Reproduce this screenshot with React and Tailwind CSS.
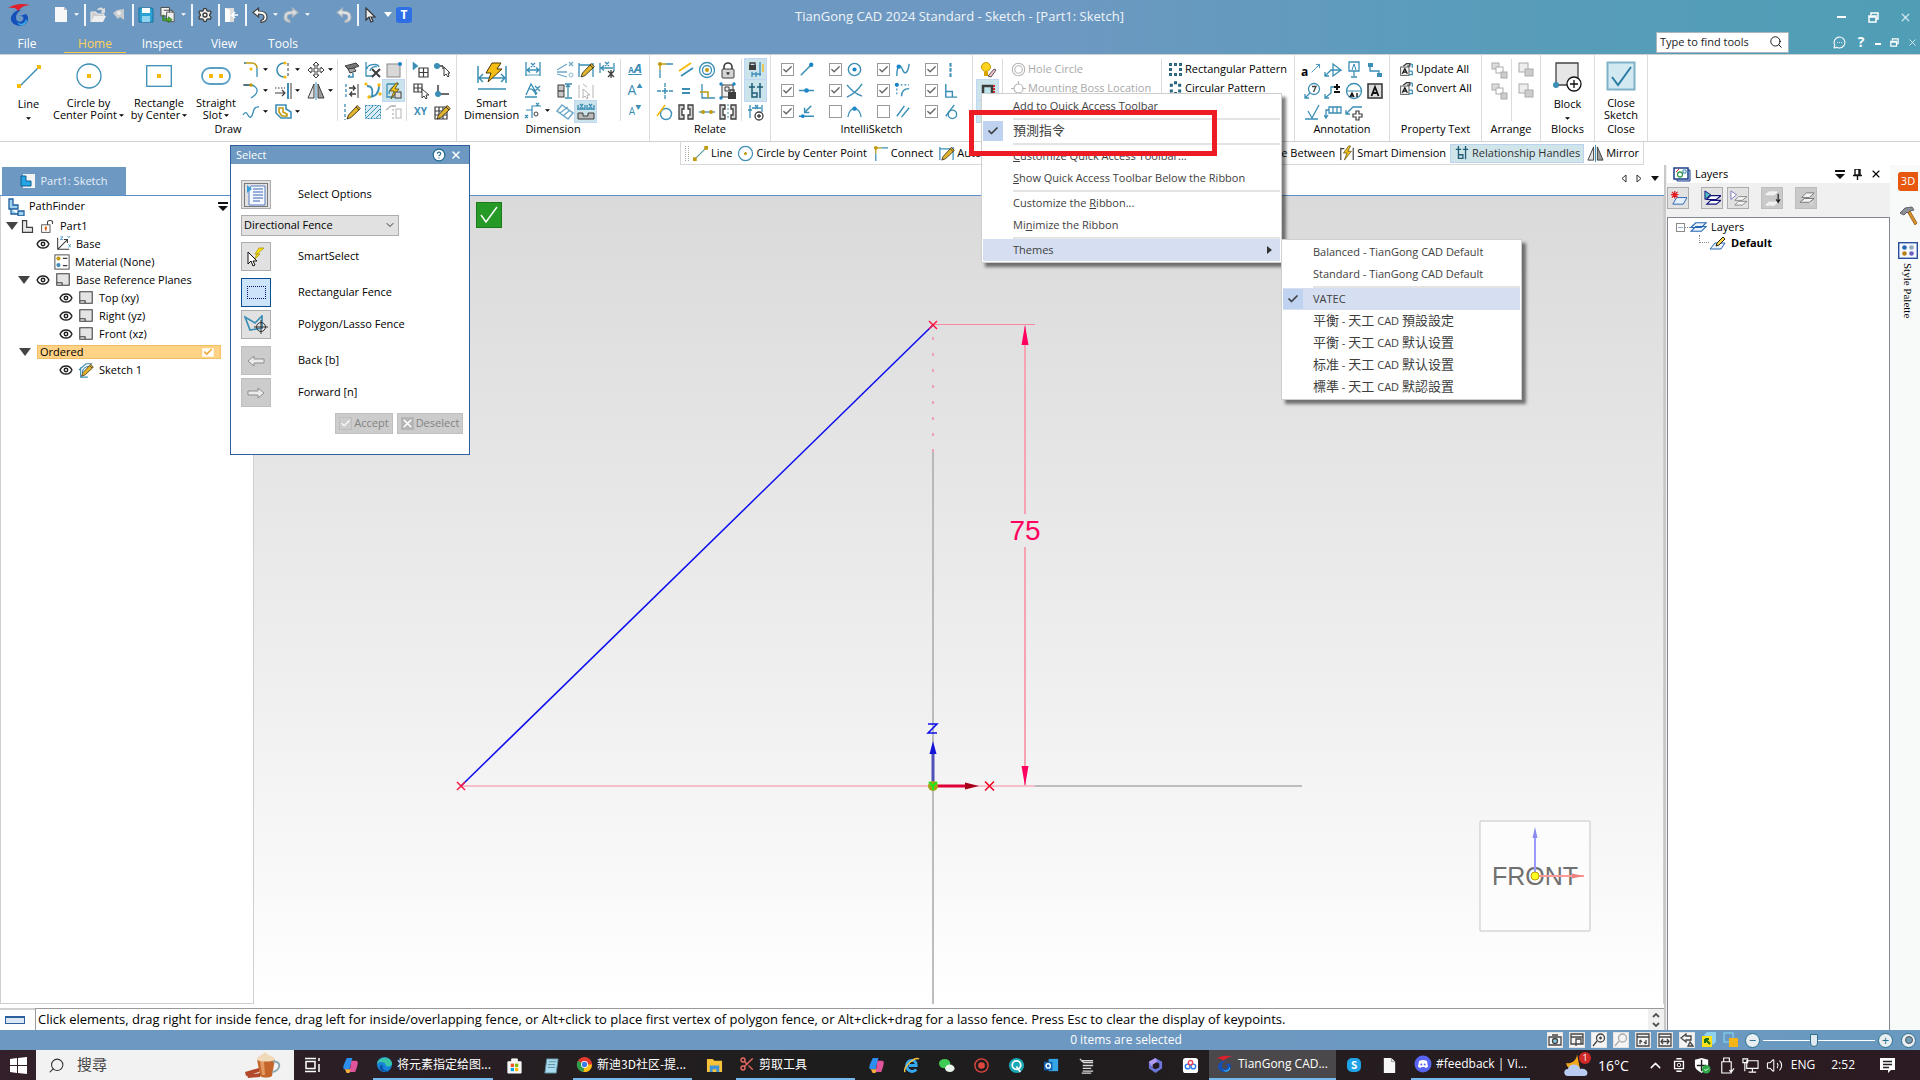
// File: src/screens/Sketch/SketchWorkspace.jsx
import React from 'react';
import {
  Search, Settings, MousePointer2, Minus, X, HelpCircle, ChevronUp, ChevronDown, Eye, Check,
  MessageCircleMore, Volume2, Usb, MonitorSmartphone, Scissors, MessageSquareText,
} from 'lucide-react';

const T = '#3b8eb5';
const Y = '#f7b90a';
const O = '#c09a10';
const D = '#3d3d3d';
const L = '#b4b4b4';

const P = ({ d, c = T, w = 1.3, f = 'none', dash }) => (
  <path d={d} stroke={c} strokeWidth={w} fill={f} strokeDasharray={dash} />
);
const Dot = ({ x, y, r = 2, c = '#1c86c8' }) => <circle cx={x} cy={y} r={r} fill={c} />;
const Bolt = ({ d = 'M11 1L5 9h4l-3 8 8-10h-4l3-6z' }) => <path d={d} fill="#f5c518" stroke="#5b4a10" strokeWidth=".8" />;
const Pencil = () => <path d="M4 16l1.500-4L13 4l3 3-8 7.500zM13 4l1.200-1.500 3 3L16 7" fill="#e3b52c" stroke="#3d3320" strokeWidth=".9" />;

// every small ribbon glyph sits in an 18 x 18 box
const ICONS = {
  fillet: <><P d="M2 2h8a5 5 0 0 1 5 5" c={O} w={1.6} /><P d="M2 2h2M15 7v9" /><Dot x={9} y={8} r={1.5} c={Y} /></>,
  arc: <><P d="M2 3h7c6 1 8 6 4 10l-4 3" /><P d="M1 3h7" c={D} w={1} /><Dot x={9} y={3} r={1.8} c={O} /></>,
  curve: <P d="M1 12c4-7 5 4 8 2s1-11 8-10" />,
  arcDash: <><P d="M10 2a7 7 0 1 0 0 14" w={1.6} /><P d="M14 2v14" c={D} w={1} dash="3 2" /><Dot x={11} y={2} r={1.6} c={Y} /><Dot x={11} y={16} r={1.6} c={Y} /></>,
  extend: <><P d="M14 1v16" w={2} /><P d="M17 1v16" c={D} w={1} /><P d="M1 6h10" c={D} dash="1.5 1.5" w={1} /><P d="M1 11h9M8 8l3 3-3 3" c={D} w={1.2} /></>,
  offset: <><P d="M2 2h10v4l5 3v6H7l-5-5z" w={1.6} /><P d="M5 5h4v4l4 2v2H8L5 9z" c={O} w={1.6} /></>,
  move: <P d="M9 1l3 3h-2v4h4V6l3 3-3 3v-2h-4v4h2l-3 3-3-3h2v-4H4v2L1 9l3-3v2h4V4H6z" c={D} w={1} f="#fff" />,
  mirror: <><P d="M7 2v14H1z" c={D} w={1} f="#e4e4e4" /><P d="M11 2v14h6z" c={D} w={1} f="#9b9b9b" /><P d="M9 0v18" w={1} /></>,
  plane: <><P d="M2 5l11-3 3 3-10 4z" c={D} w={1} f="#777" /><P d="M5 8l6-1 2 3-6 2z" c={D} w={1} f="#aaa" /><P d="M10 12v4H5M7 14l-2 2" w={1.5} /></>,
  trim: <><P d="M2 1v14h6M3 8c0-5 11-6 12-2M6 10c0-3 4-5 7-4" /><P d="M8 8l8 8M16 8l-8 8" c={D} w={2} /></>,
  square: <><rect x="2" y="3" width="13" height="13" fill="#d8d8d8" stroke="#888" /><Dot x={15} y={3} r={2} /></>,
  split: <><P d="M3 2v14" dash="3 2" /><P d="M15 2v14" c={D} w={1} /><P d="M6 6h6l-2-2.500M12 6l-2 2.500M13 12H7l2-2.500M7 12l2 2.500" c={D} /></>,
  blend: <><P d="M3 4c5 0 6 3 5 10M15 4c0 8-4 11-11 11" w={1.8} /><Dot x={2} y={2} r={1.6} c={Y} /><Dot x={15} y={3} r={1.7} c={Y} /><Dot x={16} y={12} r={1.7} c={Y} /><Dot x={5} y={15} r={1.7} c={Y} /></>,
  boltSketch: <><P d="M2 2h12M2 2v13h7M4 12C4 7 8 4 12 4" /><Bolt /><rect x="10" y="10" width="6" height="6" fill="#ddd" stroke={D} /></>,
  pencilDash: <><P d="M2 1v16" dash="3 2" /><Pencil /></>,
  hatch: <><rect x="1.5" y="2.5" width="15" height="13" fill="#d9ecf5" stroke={T} strokeDasharray="2 1" /><P d="M2 10l7-7M2 15L14 3M7 15l9-9M12 15l4-4" w={1} /></>,
  fold: <><P d="M1 7l5-4h5" c={L} /><rect x="11" y="6" width="5" height="9" fill="none" stroke={L} /><P d="M8 2v14" c={L} dash="2 2" /></>,
  gridArrow: <><P d="M1 1v8l5-4z" f={T} w={.5} /><P d="M7 7h9v9H7zM11.500 7v9M7 11.500h9" c={D} w={1.2} /></>,
  gridCursor: <><P d="M2 2h8v8H2zM6 2v8M2 6h8" c={D} w={1.2} /><P d="M10 7v9l2-2 2 3 1-1-1-3h3z" c={D} w={1} f="#fff" /></>,
  nodeCursor: <><P d="M2 5h8M10 5v3" c={D} /><Dot x={4} y={5} r={3} c={T} /><P d="M11 6v9l2-2 2 3 1-1-1-3h2z" c={D} w={1} f="#fff" /></>,
  corner: <><P d="M5 3v9h11" c={D} w={1.5} /><Dot x={5} y={12} r={3} c={T} /></>,
  gridPencil: <><P d="M2 4h12v12H2zM6 4v12M10 4v12M2 8h12M2 12h12" c={D} w={1.2} /><Pencil /></>,
  dimH: <><P d="M2 2v14M16 2v14M3 10h12M3 10l3-2.500M3 10l3 2.500M15 10l-3-2.500M15 10l-3 2.500M7 3l4 4M11 3L7 7" /><P d="M2 15h14" w={.8} /></>,
  dimA: <><P d="M1 16h12M2 14L7 3l6 10M4 8c4-1 7 2 8 6M11 5l5 5M16 5l-5 5" /></>,
  dimC: <><P d="M2 8h6v8M8 8V4h9M12 1l3 3M15 1l-3 3M1 13l3 3M4 13l-3 3" w={1.2} /><circle cx="12" cy="12" r="2" stroke={D} fill="none" /></>,
  slopes: <><P d="M1 9L11 3M1 11h10M1 13l10 3M13 1l4 4M17 1l-4 4" c="#6fa9c6" /><circle cx="15" cy="14" r="2" stroke="#8dbbd2" fill="none" /></>,
  dimV: <><rect x="2" y="3" width="6" height="12" fill="#c8c8c8" stroke={D} /><P d="M2 9h6" c={D} /><P d="M12 3v12M9 2h7M9 16h7M10 5l2-2 2 2" /></>,
  dimD: <><P d="M1 8l5-6 11 8-5 6zM4 10l8-6M7 13l7-6" c="#6fa9c6" w={1.5} /></>,
  dimPencil: <><P d="M2 2v14M16 2v14M2 4h14" /><Pencil /></>,
  dimX: <><P d="M2 2v10M16 2v8M3 7h12M3 7l3-2.500M3 7l3 2.500M7 1l4 4M11 1L7 5" /><P d="M10 10l6 6M16 10l-6 6M13 9v8" c={D} /></>,
  dimOff: <><P d="M2 3v13M16 3v13M6 2l4 3" c={L} w={1} /><P d="M6 7v9l2-2 2 3 1-1-1-3h3z" c={L} w={1} /></>,
  stampDim: <><P d="M1 2v5M8 2v5M1 6h7M10 2v5M17 2v5M10 6h7M3 1l3 4M6 1L3 5M12 1l3 4M15 1l-3 4" /><P d="M1 10h5v3h5v-3h6v6H1z" c={D} f="#bbb" w={1} /></>,
  connect: <><P d="M4 3h6M4 3v6" c={O} w={1.4} /><P d="M10 3h7M4 9v8" /><Dot x={4} y={3} r={2} c={O} /></>,
  parallel: <><P d="M2 10L14 2" c={Y} w={1.8} /><P d="M4 15l12-8" w={1.8} /></>,
  rings: <><circle cx="9" cy="9" r="7.5" fill="none" stroke={T} strokeWidth="1.3" /><circle cx="9" cy="9" r="4.5" fill="none" stroke={T} strokeWidth="1.3" /><Dot x={9} y={9} r={2} c={O} /></>,
  lock: <><P d="M5 9V6a4 4 0 0 1 8 0v3" c={D} w={1.6} /><rect x="3" y="8" width="12" height="9" rx="1" fill="#d5d5d5" stroke={D} /><P d="M9 11v3M7.500 12h3" c={D} /></>,
  cross: <><P d="M9 1v4M9 13v4M1 9h4M13 9h4" /><P d="M6 9h6M9 6v6" w={1.5} /></>,
  equal: <P d="M5 7h8M5 11h8" w={2} />,
  perp: <><P d="M4 2v14h13" c={T} /><P d="M2 10h8v6" c={O} w={1.5} /></>,
  rigid: <><rect x="3" y="3" width="11" height="12" fill="#eee" stroke={D} /><P d="M6 5h4v4H6z" c={D} w={1} /><Dot x={2} y={2} r={1.7} /><Dot x={15} y={2} r={1.7} /><Dot x={2} y={16} r={1.7} /><rect x="9" y="10" width="8" height="7" fill={D} /><P d="M11 10V8h4v2" c={D} /></>,
  tangent: <><circle cx="10" cy="11" r="5.5" fill="none" stroke={T} strokeWidth="1.4" /><P d="M1 13L9 2" c={Y} w={1.5} /></>,
  symL: <><P d="M2 2h5v4H5v6h2v4H2zM16 2h-5v4h2v6h-2v4h5z" c={D} f="#d5d5d5" /></>,
  symR: <><P d="M1 2h5v4H4v6h2v4H1zM17 2h-5v4h2v6h-2v4h5z" c={D} f="#d5d5d5" /><P d="M9 1v16" dash="2 2" w={1} /></>,
  collinear: <><P d="M1 9h16" /><Dot x={5} y={9} r={2} c={O} /><Dot x={13} y={9} r={2} c={O} /></>,
  lockDim: <><rect x="2" y="4" width="7" height="5" fill={D} /><P d="M3 4V2h5v2" c={D} /><P d="M13 1v14M5 13h9M5 11v5M9 11v5" /><P d="M16 3v8" c={Y} /></>,
  handles: <><P d="M5 1v14h5v-4H5M13 1v15M2 5h6M10 5h6" c="#1f5d77" w={1.5} /></>,
  relAdd: <><P d="M3 2v13M15 2v7M1 7h4M5 5h9M8 2l3 4M11 2L8 6" /><circle cx="12" cy="13" r="4" fill="#fff" stroke={D} strokeWidth="1.3" /><P d="M12 11v4M10 13h4" c={D} /></>,
  endPt: <><P d="M3 15L14 4" w={1.6} /><Dot x={14} y={4} r={2.3} /></>,
  midPt: <><P d="M1 9h16" w={1.6} /><Dot x={9} y={9} r={2.5} /></>,
  onPt: <><P d="M1 14h16" w={1.6} /><P d="M14 3l-6 6M7 5v5h5" w={1.6} /><Dot x={5} y={14} r={2} /></>,
  centerPt: <><circle cx="9" cy="9" r="6.5" fill="none" stroke={T} strokeWidth="1.5" /><Dot x={9} y={9} r={2.2} /></>,
  crossPt: <P d="M1 3c5 6 8 9 16 12M17 2C13 8 8 13 1 16" w={1.5} />,
  peakPt: <><P d="M2 15C4 3 14 3 16 15" /><Dot x={9} y={6} r={2.3} /></>,
  editPt: <><P d="M3 16C3 3 7 3 9 9s6 4 7-6" w={1.5} /><Dot x={5} y={6} r={2.3} /></>,
  arcPt: <><P d="M3 3h13M3 3v12" dash="2 2" /><P d="M8 15c0-5 3-8 8-8" w={1.5} /><Dot x={3} y={3} r={2.2} /></>,
  parPt: <P d="M3 14L11 3M8 15L16 5" w={1.5} />,
  vert: <P d="M9 2v15" w={2.2} dash="4 1.5" />,
  right: <P d="M4 2v14h12M4 10h7v6" w={1.5} />,
  tanPt: <><circle cx="11" cy="12" r="4.5" fill="none" stroke={T} strokeWidth="1.5" /><P d="M4 14L13 2" w={1.5} /></>,
  bulb: <><circle cx="7" cy="6" r="4.5" fill="#ffd21f" stroke="#c79a00" /><rect x="5" y="11" width="4" height="4" fill="#d9a400" /><P d="M9 15l6-7 2 1-5 7z" c="#555" w={1} f="#f6c2c8" /></>,
  region: <><rect x="4" y="4" width="9" height="9" fill="#bfe3ea" stroke={D} strokeWidth="2.5" /><P d="M2 16h3M15 3v12" c="#c8242b" w={2} dash="2 1" /></>,
  predict: <rect x="3" y="3" width="12" height="12" fill="none" stroke={T} />,
  holeC: <><circle cx="9" cy="9" r="7.5" fill="none" stroke={L} strokeWidth="1.3" /><circle cx="9" cy="9" r="4.5" fill="none" stroke={L} strokeWidth="1.3" /></>,
  boss: <><circle cx="9" cy="9" r="5.5" fill="none" stroke={L} strokeWidth="1.3" /><P d="M9 0v4M9 14v4M0 9h4M14 9h4" c={L} /></>,
  rectPat: <P d="M2 2h2v2H2zM8 2h2v2H8zM14 2h2v2h-2zM2 8h2v2H2zM14 8h2v2h-2zM2 14h2v2H2zM8 14h2v2H8zM14 14h2v2h-2z" c="#22607b" w={1.5} f="#dceef5" />,
  circPat: <P d="M8 1h2v2H8zM3 4h2v2H3zM13 4h2v2h-2zM3 11h2v2H3zM13 11h2v2h-2zM8 14h2v2H8z" c="#22607b" w={1.6} f="#dceef5" />,
  leader: <P d="M5 13L16 2M11 2h5v5" />,
  flag: <P d="M1 15l6-6h10L9 3v12l8-6M1 11v4h4" />,
  datum: <><P d="M4 1h10v9H4zM9 10v5M6 16h6" /><P d="M7 9l2-6 2 6" w={1} /></>,
  jog: <><rect x="2" y="2" width="5" height="4" fill={T} /><rect x="11" y="12" width="5" height="4" fill={T} /><P d="M4 6v4h9v2" /></>,
  balloon: <><circle cx="11" cy="7" r="5.5" fill="none" stroke={T} strokeWidth="1.3" /><P d="M7 11l-5 5M2 12v4h4" /><P d="M9 4.500h4L10.500 10" c={D} /></>,
  tol: <><P d="M1 16l6-5V5h4M1 12v4h4" /><P d="M13 2v6M10 5h6M10 10h6" c="#111" w={2} /></>,
  a1: <><circle cx="9" cy="9" r="7.5" fill="none" stroke={T} strokeWidth="1.3" /><P d="M1.500 9h15" w={1} /><P d="M5 15l2-4 2 4M5.500 14h3M12 11v4" c="#111" w={1.4} /></>,
  boxA: <><rect x="2" y="2" width="14" height="14" fill="#ddd" stroke={D} strokeWidth="1.6" /><P d="M5.500 14L9 5l3.500 9M7 11h4" c="#111" w={1.8} /></>,
  weld: <P d="M2 16h13M5 8l4 7 7-13" />,
  frame: <P d="M5 4h12v6H5zM9 4v6M13 4v6M5 7H2v8M0 12l2 3 2-3" />,
  leaderAdd: <><P d="M1 11l7-7h9M1 7v4h4" /><P d="M11 8h3v3h3v3h-3v3h-3v-3H8v-3h3z" c={D} f="#fff" w={1.2} /></>,
  prop: <><rect x="2" y="6" width="10" height="10" fill="#f4f4f4" stroke={D} /><P d="M4 14l3-6 3 6M5 12h4" c="#111" w={1.5} /><P d="M12 2l4 1v4M12 11h4M16 11v4h-4" w={1.5} /><P d="M5 5l4-3h4v3h-3" c={D} w={1.5} f="#ddd" /></>,
  arrA: <><rect x="2" y="2" width="7" height="6" fill="#ddd" stroke="#aaa" /><rect x="6" y="6" width="7" height="6" fill="#fff" stroke="#aaa" /><rect x="11" y="11" width="6" height="6" fill="#ccc" stroke="#aaa" /></>,
  arrB: <><rect x="2" y="2" width="9" height="9" fill="#eee" stroke="#aaa" /><rect x="8" y="8" width="8" height="7" fill="#ccc" stroke="#aaa" /></>,
  line: <><P d="M3 15L15 3" c="#5a9f9f" /><rect x="1" y="13" width="4" height="4" fill={O} /><rect x="13" y="1" width="4" height="4" fill={O} /></>,
  circle: <><circle cx="9" cy="9" r="7.5" fill="none" stroke={T} strokeWidth="1.3" /><Dot x={9} y={9} r={1.6} c={O} /></>,
  smart: <><P d="M2 3v14M16 3v14M2 4h4" c={D} /><Bolt /></>,
  plate: <><P d="M2 2h14v13H2z" c={D} w={1.2} f="#e4e4e4" /><P d="M2 12h6v3" c={D} w={1.2} /></>,
  lshape: <P d="M3 2h5v8h7v6H3z" c={D} w={1.4} f="#e8e8e8" />,
  unlock: <><rect x="2" y="7" width="10" height="9" fill="#fff" stroke={D} /><P d="M9 7V4c0-3 6-3 6 0v2" c={D} /><P d="M7 9v5M5.500 11h3" c="#d35400" w={1.5} /></>,
  axes: <><P d="M3 2v13h13M3 15L14 4M10 4h4v4" c={D} w={1.2} /><P d="M6 1h3L6 4h3M14 0l1.500 2L17 0M15 9l3 4M18 9l-3 4" w={.9} /></>,
  material: <><rect x="1" y="1" width="16" height="16" fill="#fff" stroke={D} /><Dot x={5} y={5} r={2.3} c={O} /><Dot x={5} y={12.5} r={2.3} c={T} /><P d="M10 5h5M10 13h5" c={D} /></>,
  sketch: <><P d="M1 9l8-7h7M3 6v11h8M5 12c0-5 4-7 8-7" /><Pencil /></>,
  tree: <><P d="M2 1h4v6h5v4H2z" c="#1f5d9c" f="#9fd0ee" /><P d="M4 11v5h7M11 13h6v5h-6z" c="#1f5d9c" f="#9fd0ee" /></>,
  newLayer: <><P d="M3 15l4-7h11l-4 7z" c="#2766b0" f="#e6f0fa" w={1} /><P d="M2 2l6 6M8 2L2 8M5 1v8M1 5h8" c="#e0181f" w={1.3} /></>,
  layerOn: <><P d="M3 10l4-4h11l-5 4zM3 15l4-4h11l-5 4z" c="#10107a" f="#fff" w={1.2} /><P d="M1 1v9l6-5z" c="#10107a" f="#4ec2c4" w={1} /></>,
  layerOff: <><P d="M5 11l4-4h9l-5 4zM5 16l4-4h9l-5 4z" c="#888" f="#f4f4f4" w={1} /><P d="M1 1v9l6-5z" c="#7a7ac0" f="#fff" w={1} /></>,
  layerMove: <><P d="M2 5l3-3h9l-3 3zM2 16l3-3h9l-3 3z" c="#fafafa" f="#eee" w={1} /><P d="M15 4v8M13 10l2 3 2-3" c="#222" /></>,
  layerDel: <><P d="M2 13l5-4h10l-5 4zM4 8l5-5h8l-5 5z" c="#777" f="#f4f4f4" w={1} /><P d="M12 12l4 4M16 12l-4 4" c="#ddd" w={1} /></>,
  layers: <P d="M1 13l5-5h11l-5 5zM1 9l5-5h11l-5 5z" c="#2766b0" f="#eaf2fb" w={1.2} />,
};

const Icon = ({ name, size = 18 }) => (
  <svg width={size} height={size} viewBox="0 0 18 18" className="shrink-0" aria-hidden="true">{ICONS[name]}</svg>
);

const Caret = ({ className = 'text-black' }) => (
  <svg width="5" height="3" viewBox="0 0 6 3" className={`shrink-0 ${className}`} aria-hidden="true"><path d="M0 0h6L3 3z" fill="currentColor" /></svg>
);

const Tool = ({ name, active }) => (
  <button aria-label={name} className={`flex h-[21px] w-[21px] items-center justify-center ${active ? 'bg-[#cbe3ea] outline outline-[#c0d6f2]' : ''}`}>
    {name && <Icon name={name} />}
  </button>
);

const Rows = ({ rows, active = [], className = '' }) => (
  <div className={`flex flex-col pt-1 ${className}`}>
    {rows.map((r, i) => (
      <div key={i} className="flex">{r.map((n) => <Tool key={n} name={n} active={active.includes(n)} />)}</div>
    ))}
  </div>
);

const DropTool = ({ name }) => (
  <button aria-label={name} className="flex h-[21px] w-8 items-center gap-[3px] pl-[2px]"><Icon name={name} /><Caret /></button>
);

const Group = ({ label, className, children }) => (
  <section className={`flex shrink-0 flex-col border-r border-[#dcdcdc] ${className}`}>
    <div className="flex h-[66px]">{children}</div>
    <h2 className="text-center text-[11px] leading-4">{label}</h2>
  </section>
);
const Sep = () => <div className="mt-1 h-[62px] w-px shrink-0 bg-[#dcdcdc]" />;

const BigTool = ({ art, lines, caret, className }) => (
  <button className={`flex shrink-0 flex-col items-center text-[11px] leading-3 ${className}`}>
    <span className="flex h-[43px] items-center">{art}</span>
    {lines.map((l, i) => (
      <span key={l} className="flex items-center gap-[2px] whitespace-nowrap">{l}{caret && i === 1 && <Caret />}</span>
    ))}
    {caret && lines.length === 1 && <span className="mt-[7px] flex"><Caret /></span>}
  </button>
);

const Snap = ({ name, on }) => (
  <label className="flex h-[21px] w-12 items-center gap-1">
    <span className="relative flex">
      <input type="checkbox" defaultChecked={on} aria-label={name} className="peer h-[13px] w-[13px] appearance-none border border-[#9a9a9a] bg-white" />
      <Check size={11} strokeWidth={3} className="absolute top-px left-px hidden text-[#666] peer-checked:block" />
    </span>
    <Icon name={name} size={17} />
  </label>
);

const snaps = [
  [['endPt', 1], ['centerPt', 1], ['editPt', 1], ['vert', 1]],
  [['midPt', 1], ['crossPt', 1], ['arcPt', 1], ['right', 1]],
  [['onPt', 1], ['peakPt', 0], ['parPt', 0], ['tanPt', 1]],
];

/* ---------- title bar ---------- */

const Bar = ({ className }) => <span className={`h-[22px] w-[2px] shrink-0 bg-white/90 ${className}`} />;
const QBtn = ({ label, className, children }) => (
  <button aria-label={label} className={`flex shrink-0 items-center justify-center ${className}`}>{children}</button>
);

const Logo = ({ size = 24 }) => (
  <svg width={size} height={size} viewBox="0 0 24 24" className="shrink-0" aria-hidden="true">
    <path d="M10 7C4 10 1 15 4 19c3 5 12 5 15 0 2-3 1-6-1-8l-6 2c3 0 4 1 3 4-2 3-7 2-7-2 0-3 1-5 5-8z" fill="#1450b8" />
    <path d="M9 19c3 3 8 2 9-3l1 2c-2 5-8 6-10 1z" fill="#35b0f0" />
    <path d="M0 5C6 1 14 0 22 2c-5 0-9 2-12 6-1-3-5-4-10-3z" fill="#e0202c" />
  </svg>
);

const Undo = ({ flip, c = '#444', f = '#fff' }) => (
  <svg width="16" height="16" viewBox="0 0 16 16" className={flip ? '-scale-x-100' : ''} aria-hidden="true">
    <path d="M1 5.500L6.500 1v3C12 4 15 6 15 10c0 3-2 5-6 5.500v-2c2-.5 3-2 3-3.500 0-2-2-3-5.500-3v3z" fill={f} stroke={c} strokeWidth="1.2" />
  </svg>
);

const Restore = ({ size = 11, className = 'text-white' }) => (
  <svg width={size} height={size} viewBox="0 0 11 11" className={className} aria-hidden="true"><path d="M3 3V1h7v6H8M1 4h7v6H1zM1 5h7" fill="none" stroke="currentColor" strokeWidth="1.5" /></svg>
);

function TitleBar() {
  return (
    <header className="flex h-[54px] flex-col bg-linear-to-r from-[#6d98c1] from-55% via-[#5a9cbb] via-75% to-[#4f9eb5] text-white">
      <div className="relative flex h-[30px] items-center">
        <div className="flex items-center pb-px pl-2">
          <Logo />
          <QBtn label="New" className="ml-[19px] w-5"><svg width="14" height="17" viewBox="0 0 14 17"><path d="M1 1h9l3 3v12H1z" fill="#f8f8f8" /><path d="M10 1v3h3z" fill="#bbb" /></svg></QBtn>
          <Caret className="ml-[3px] text-white" /><Bar className="ml-[5px]" />
          <QBtn label="Open" className="ml-[2px] w-5"><svg width="17" height="17" viewBox="0 0 17 17"><path d="M1 16V6h5l1 2h7v2" fill="#ccc" stroke="#eee" /><path d="M1 16l3-6h12l-3 6z" fill="#eee" /><path d="M7 4c2-3 5-3 6-1l2-1v5h-4l1-2c-1-2-3-1-5-1z" fill="#ddd" /></svg></QBtn>
          <QBtn label="Find" className="ml-[2px] w-[18px]"><svg width="12" height="14" viewBox="0 0 12 14"><path d="M11 1v11L7 9 5 11 0 5l4-3z" fill="#c9ccd0" /><circle cx="6" cy="5" r="2" fill="#eee" /></svg></QBtn>
          <Bar className="ml-1" />
          <QBtn label="Save" className="ml-[2px] w-5"><svg width="16" height="16" viewBox="0 0 16 16"><path d="M1 1h13l1 1v13H1z" fill="#2aa2d3" stroke="#1a6f9c" /><path d="M4 1h8v5H4z" fill="#fff" /><path d="M4 9h8v6H4z" fill="#8fd3ee" /></svg></QBtn>
          <QBtn label="Save All" className="ml-1 w-4"><svg width="17" height="17" viewBox="0 0 17 17"><path d="M1 1h9v9H1zM4 4h9v9" fill="#f2f2f2" stroke="#444" /><path d="M7 6h8v10H7z" fill="#eee" stroke="#555" /><path d="M4 9v4h5v-2l4 3-4 3v-2H3V9z" fill="#4fae2b" stroke="#256c12" strokeWidth=".7" /></svg></QBtn>
          <Caret className="ml-[5px] text-white" /><Bar className="ml-[5px]" />
          <QBtn label="Settings" className="ml-[3px] w-[18px] text-[#3a3a3a]"><Settings size={16} strokeWidth={2} fill="#eee" /></QBtn>
          <Bar className="ml-1" />
          <QBtn label="Exit" className="ml-[2px] w-[18px]"><svg width="15" height="16" viewBox="0 0 15 16"><path d="M1 1h9v14H1z" fill="#ddd" /><path d="M1 1l5 2v12H1z" fill="#fff" /><path d="M14 8H8l3-3M8 8l3 3" stroke="#fff" strokeWidth="1.5" fill="none" /></svg></QBtn>
          <Bar className="ml-[5px]" />
          <QBtn label="Undo" className="ml-1 w-[18px]"><Undo /></QBtn>
          <Caret className="ml-1 text-white" />
          <QBtn label="Redo" className="ml-[5px] w-4"><Undo flip c="#aab4bd" f="#d9dde0" /></QBtn>
          <Caret className="ml-[6px] text-white" />
          <QBtn label="Repeat" className="ml-[26px] w-4"><Undo c="#aab4bd" f="#e3e6e8" /></QBtn>
          <Bar className="ml-[5px]" />
          <QBtn label="Select" className="ml-[3px] w-[18px]"><svg width="12" height="16" viewBox="0 0 12 16"><path d="M1 1v12l3-3 2 5 2-1-2-4h4z" fill="#eee" stroke="#333" strokeWidth="1.2" /></svg></QBtn>
          <svg width="8" height="5" viewBox="0 0 8 5" className="ml-1 shrink-0"><path d="M0 0h8L4 5z" fill="#fff" /></svg>
          <span className="ml-1 flex h-4 w-4 items-center justify-center rounded-[3px] bg-[#2f6fe6] text-[12px] font-bold">T</span>
        </div>
        <h1 className="absolute inset-x-0 top-2 -ml-[1px] text-center text-[13px] leading-4 text-white/90">TianGong CAD 2024 Standard - Sketch - [Part1: Sketch]</h1>
        <div className="relative ml-auto flex items-center gap-5 pt-1 pr-2">
          <button aria-label="Minimize" className="w-[11px]"><span className="block h-[2px] w-[9px] bg-white" /></button>
          <button aria-label="Restore"><Restore /></button>
          <button aria-label="Close" className="text-white/70"><X size={13} strokeWidth={2.5} /></button>
        </div>
      </div>
      <div className="flex h-6 items-stretch">
        <nav className="flex text-xs leading-7">
          <a href="#file" className="w-[64px] pr-[10px] text-center">File</a>
          <a href="#home" className="h-[23px] w-[62px] border-b border-[#ffc83c] text-center text-[#ffd35c]">Home</a>
          <a href="#inspect" className="w-[72px] text-center">Inspect</a>
          <a href="#view" className="w-[52px] text-center">View</a>
          <a href="#tools" className="w-[66px] text-center">Tools</a>
        </nav>
        <div className="ml-auto flex items-center pr-[2px]">
          <div className="mr-11 flex h-[21px] w-[133px] items-center border border-[#a9b6bd] bg-white text-black">
            <input aria-label="Find tools" placeholder="Type to find tools" className="w-[112px] pl-[3px] text-[11px] outline-none placeholder:text-[#222]" />
            <Search size={14} strokeWidth={1.5} />
          </div>
          <button aria-label="Feedback"><MessageCircleMore size={13} /></button>
          <button aria-label="Help" className="ml-[9px] w-3 text-[14px] leading-4 font-bold">?</button>
          <button aria-label="Minimize document" className="mt-1 ml-2"><span className="block h-[2px] w-[6px] bg-white" /></button>
          <button aria-label="Restore document" className="ml-[9px]"><Restore size={9} /></button>
          <button aria-label="Close document" className="ml-2 text-white/80"><X size={11} strokeWidth={2} /></button>
        </div>
      </div>
    </header>
  );
}

/* ---------- ribbon ---------- */

const lineArt = <svg width="26" height="26" viewBox="0 0 26 26"><path d="M4 22L22 4" stroke={T} strokeWidth="1.5" /><rect x="1" y="20" width="4" height="4" fill={Y} /><rect x="21" y="1" width="4" height="4" fill={Y} /></svg>;
const circleArt = <svg width="26" height="26" viewBox="0 0 26 26"><circle cx="13" cy="13" r="12" fill="none" stroke={T} strokeWidth="1.3" /><rect x="11" y="11" width="4" height="4" fill={Y} /></svg>;
const rectArt = <svg width="26" height="22" viewBox="0 0 26 22"><rect x=".7" y=".7" width="24.6" height="20.6" fill="none" stroke={T} strokeWidth="1.3" /><rect x="11" y="9" width="4" height="4" fill={Y} /></svg>;
const slotArt = <svg width="30" height="18" viewBox="0 0 30 18"><rect x="1" y="1" width="28" height="16" rx="8" fill="none" stroke="#57a0c3" strokeWidth="1.8" /><rect x="8" y="7" width="4" height="4" fill={Y} /><rect x="18" y="7" width="4" height="4" fill={Y} /></svg>;
const smartArt = <svg width="30" height="28" viewBox="0 0 30 28"><path d="M1 4v17M29 4v17M2 16h26M2 16l4-4M2 16l4 4M28 16l-4-4M28 16l-4 4M1 27h28" stroke={T} strokeWidth="1.5" fill="none" /><path d="M15 1h9l-4 6h5L11 20l3-9H9z" fill="#f6bd16" stroke="#4b3a06" /></svg>;
const blockArt = <svg width="30" height="30" viewBox="0 0 30 30"><path d="M3 1h22v22H3z" fill="#e6e6e6" stroke="#444" strokeWidth="1.3" /><circle cx="3" cy="23" r="3" fill={T} /><circle cx="21" cy="22" r="7" fill="#fff" stroke="#111" strokeWidth="1.3" /><path d="M21 18v8M17 22h8" stroke="#111" strokeWidth="1.3" /></svg>;
const closeArt = <svg width="30" height="30" viewBox="0 0 30 30"><rect x="1.5" y="1.5" width="27" height="27" fill="#d3e9f2" stroke="#7fb2c9" strokeWidth="2" /><path d="M6 16l6 8L25 6" fill="none" stroke="#2c7da5" strokeWidth="2" /></svg>;

const TextTool = ({ name, dim, children }) => (
  <button className={`flex h-[19px] items-center gap-[2px] text-[11px] whitespace-nowrap ${dim ? 'text-[#a8a8a8]' : ''}`}><Icon name={name} size={15} />{children}</button>
);

function Ribbon() {
  return (
    <div className="flex h-[88px] border-t border-b border-[#d0d0d0] bg-white text-black">
      <Group label="Draw" className="w-[457px]">
        <BigTool className="w-[57px]" art={lineArt} lines={['Line']} caret />
        <BigTool className="w-[63px]" art={circleArt} lines={['Circle by', 'Center Point']} caret />
        <BigTool className="w-[78px]" art={rectArt} lines={['Rectangle', 'by Center']} caret />
        <BigTool className="w-[36px]" art={slotArt} lines={['Straight', 'Slot']} caret />
        <div className="ml-[6px] grid w-[97px] grid-cols-3 content-start pt-1">
          <DropTool name="fillet" /><DropTool name="arcDash" /><DropTool name="move" />
          <DropTool name="arc" /><DropTool name="extend" /><DropTool name="mirror" />
          <DropTool name="curve" /><DropTool name="offset" />
        </div>
        <Sep />
        <Rows className="w-[68px] pl-[3px]" active={['boltSketch']} rows={[['plane', 'trim', 'square'], ['split', 'blend', 'boltSketch'], ['pencilDash', 'hatch', 'fold']]} />
        <Sep />
        <div className="flex flex-col pt-1 pl-[3px]">
          <div className="flex"><Tool name="gridArrow" /><Tool name="nodeCursor" /></div>
          <div className="flex"><Tool name="gridCursor" /><Tool name="corner" /></div>
          <div className="flex"><button className="w-[21px] text-[10px] font-bold text-[#3b8eb5]">XY</button><Tool name="gridPencil" /></div>
        </div>
      </Group>

      <Group label="Dimension" className="w-[193px]">
        <BigTool className="w-[65px] pl-1" art={smartArt} lines={['Smart', 'Dimension']} />
        <div className="flex w-[32px] flex-col pt-1">
          <Tool name="dimH" /><Tool name="dimA" /><DropTool name="dimC" />
        </div>
        <Rows className="w-[66px]" active={['stampDim']} rows={[['slopes', 'dimPencil', 'dimX'], ['dimV', 'dimOff'], ['dimD', 'stampDim']]} />
        <Sep />
        <div className="flex w-[28px] flex-col items-center pt-1 text-[#3b8eb5]">
          <button aria-label="Font" className="h-[21px] text-[13px] leading-[18px] font-bold underline"><span className="text-[8px]">A</span><i>A</i></button>
          <button aria-label="Grow text" className="flex h-[21px] items-center text-[14px] leading-5">A<span className="mb-2 text-[6px]">▲</span></button>
          <button aria-label="Shrink text" className="flex h-[21px] items-center text-[10px] leading-5">A<span className="mb-2 text-[6px]">▼</span></button>
        </div>
      </Group>

      <Group label="Relate" className="w-[121px]">
        <Rows className="w-[91px] pl-1" rows={[['connect', 'parallel', 'rings', 'lock'], ['cross', 'equal', 'perp', 'rigid'], ['tangent', 'symL', 'collinear', 'symR']]} />
        <Sep />
        <Rows className="pl-[3px]" active={['lockDim', 'handles']} rows={[['lockDim'], ['handles'], ['relAdd']]} />
      </Group>

      <Group label="IntelliSketch" className="w-[202px]">
        <div className="flex flex-col pt-1 pl-[10px]">
          {snaps.map((r, i) => <div key={i} className="flex">{r.map(([n, on]) => <Snap key={n} name={n} on={!!on} />)}</div>)}
        </div>
      </Group>

      <Group label="" className="w-[322px]">
        <Rows className="w-[29px] pl-1" active={['region', 'predict']} rows={[['bulb'], ['region'], ['predict']]} />
        <Sep />
        <div className="flex w-[158px] flex-col pt-[5px] pl-2"><TextTool name="holeC" dim>Hole Circle</TextTool><TextTool name="boss" dim>Mounting Boss Location</TextTool></div>
        <Sep />
        <div className="flex flex-col pt-[5px] pl-[6px]"><TextTool name="rectPat">Rectangular Pattern</TextTool><TextTool name="circPat">Circular Pattern</TextTool></div>
      </Group>

      <Group label="Annotation" className="w-[95px]">
        <div className="flex flex-col pt-1 pl-[6px]">
          <div className="flex">
            <button aria-label="Text leader" className="flex h-[21px] w-[21px] items-end text-[12px] leading-4 font-bold">a<span className="mb-1"><Icon name="leader" size={13} /></span></button>
            <Tool name="flag" /><Tool name="datum" /><Tool name="jog" />
          </div>
          <div className="flex"><Tool name="balloon" /><Tool name="tol" /><Tool name="a1" /><Tool name="boxA" /></div>
          <div className="flex"><Tool name="weld" /><Tool name="frame" /><Tool name="leaderAdd" /></div>
        </div>
      </Group>

      <Group label="Property Text" className="w-[92px]">
        <div className="flex flex-col pt-[5px] pl-[9px]"><TextTool name="prop">Update All</TextTool><TextTool name="prop">Convert All</TextTool></div>
      </Group>

      <Group label="Arrange" className="w-[59px]">
        <div className="flex w-[29px] flex-col items-center pt-1 pl-1"><Tool name="arrA" /><Tool name="arrA" /></div>
        <Sep />
        <div className="flex w-[28px] flex-col items-center pt-1"><Tool name="arrB" /><Tool name="arrB" /></div>
      </Group>

      <Group label="Blocks" className="w-[54px]"><BigTool className="w-[53px]" art={blockArt} lines={['Block']} caret /></Group>
      <Group label="Close" className="w-[53px]"><BigTool className="w-[52px]" art={closeArt} lines={['Close', 'Sketch']} /></Group>
    </div>
  );
}

function CommandBar() {
  const item = 'flex shrink-0 items-center gap-[2px] whitespace-nowrap';
  return (
    <div className="flex h-[23px] justify-end bg-white pr-[276px]">
      <div className="flex w-[964px] items-center border-r border-b border-l border-[#d8d8d8] text-[11px]">
        <span className="mr-[3px] ml-1 h-[15px] w-1 border-x border-dotted border-[#aaa]" />
        <button className={`${item} mr-[5px]`}><Icon name="line" size={17} />Line</button>
        <button className={`${item} mr-[5px]`}><Icon name="circle" size={17} />Circle by Center Point</button>
        <button className={`${item} mr-[5px]`}><Icon name="connect" size={17} />Connect</button>
        <button className={`${item} w-[43px] overflow-hidden`}><Icon name="dimPencil" size={17} />Auto</button>
        <span className="flex-1" />
        <button className={`${item} mr-1`}>Distance Between</button>
        <button className={`${item} mr-1`}><Icon name="smart" size={16} />Smart Dimension</button>
        <button className={`${item} mr-[3px] h-[19px] border border-[#bcd3ee] bg-[#cfe5ea] px-[3px] text-[#333]`}><Icon name="handles" size={16} />Relationship Handles</button>
        <button className={`${item} pr-1`}><Icon name="mirror" size={17} />Mirror</button>
      </div>
    </div>
  );
}

/* ---------- PathFinder ---------- */

const Node = ({ pad, open, eye = true, icon, children }) => (
  <li className={`flex h-[18px] items-center ${pad}`}>
    {open && <Down />}
    {eye && <Eye size={14} strokeWidth={2.5} className="mr-[5px] text-[#222]" />}
    {icon && <Icon name={icon} size={16} />}
    <span className="ml-[5px]">{children}</span>
  </li>
);
const Down = () => <svg width="12" height="8" viewBox="0 0 12 8" className="mr-[6px]"><path d="M0 0h12L6 8z" fill="#444" /></svg>;
const PanelMenu = () => <svg width="10" height="9" viewBox="0 0 10 9"><path d="M0 0h10v2H0zM0 4h10L5 9z" fill="#111" /></svg>;

function PathFinder() {
  return (
    <aside className="w-[254px] shrink-0 border-r border-b border-l border-[#cfcfcf] bg-white text-[11px]">
      <div className="flex h-[21px] items-center justify-between pr-[25px] pl-[6px]">
        <span className="flex items-center gap-1"><Icon name="tree" />PathFinder</span><PanelMenu />
      </div>
      <ul>
        <li className="flex h-[18px] items-center pl-[5px]">
          <Down /><span className="-ml-1 mr-[5px] flex"><Icon name="lshape" size={15} /></span><Icon name="unlock" size={15} /><span className="ml-[5px]">Part1</span>
        </li>
        <Node pad="pl-[35px]" icon="axes">Base</Node>
        <Node pad="pl-[53px]" eye={false} icon="material">Material (None)</Node>
        <Node pad="pl-[17px]" open icon="plate">Base Reference Planes</Node>
        <Node pad="pl-[58px]" icon="plate">Top (xy)</Node>
        <Node pad="pl-[58px]" icon="plate">Right (yz)</Node>
        <Node pad="pl-[58px]" icon="plate">Front (xz)</Node>
        <li className="flex h-[18px] items-center pl-[18px]">
          <Down /><span className="flex h-[14px] w-[184px] items-center justify-between border border-[#f3bd62] bg-[#ffd285] pr-[6px] pl-[2px]">Ordered
            <span className="flex h-[9px] w-3 items-center justify-center border border-[#fff1d6] bg-white text-[#f3a83a]"><Check size={10} strokeWidth={4} /></span>
          </span>
        </li>
        <Node pad="pl-[58px]" icon="sketch">Sketch 1</Node>
      </ul>
    </aside>
  );
}

/* ---------- Select dialog ---------- */

const DlgRow = ({ gap, box = 'border-[#adadad] bg-[#e1e1e1]', label, children }) => (
  <div className={`flex items-center ${gap}`}>
    <button aria-label={label} className={`flex h-[29px] w-[30px] items-center justify-center border ${box}`}>{children}</button>
    <span className="ml-[27px]">{label}</span>
  </div>
);

function SelectDialog() {
  return (
    <section className="absolute top-[145px] left-[230px] flex h-[310px] w-[240px] flex-col border border-[#2f5f9e] bg-white text-[11px]">
      <div className="flex h-[18px] shrink-0 items-center bg-[#6d98c1] px-[5px] text-white">
        <span className="flex-1">Select</span>
        <HelpCircle size={14} fill="#fff" className="mr-1 text-[#1e6a8f]" /><X size={12} strokeWidth={3} className="mr-[2px]" />
      </div>
      <div className="px-[10px] pt-4">
        <DlgRow gap="" label="Select Options">
          <svg width="24" height="24" viewBox="0 0 24 24"><rect x=".5" y=".5" width="23" height="23" fill="none" stroke="#111" strokeDasharray="1 1" /><path d="M7 3h14v19H5V7z" fill="#f4f8ff" stroke="#5a7fc0" /><path d="M9 6h10M9 9h10M9 12h10M9 15h10M9 18h7" stroke="#3c64b4" /><path d="M3 2v8l5-4z" fill="#3aa0dc" /></svg>
        </DlgRow>
        <div className="relative mt-[6px] w-[158px]">
          <select aria-label="Fence mode" className="block h-[21px] w-full appearance-none border border-[#adadad] bg-[#e1e1e1] pl-[2px] text-[11px]"><option>Directional Fence</option></select>
          <ChevronDown size={12} strokeWidth={1.5} className="pointer-events-none absolute top-1 right-[3px]" />
        </div>
        <DlgRow gap="mt-[6px]" label="SmartSelect">
          <svg width="22" height="22" viewBox="0 0 22 22"><path d="M19 2l-7 6h3l-6 6 3-6h-2l4-6z" fill="#ffe500" stroke="#a08a00" strokeWidth=".7" /><path d="M3 6v12l3-3 2 5 2-1-2-4h4z" fill="#fff" stroke="#111" /></svg>
        </DlgRow>
        <DlgRow gap="mt-[7px]" box="border-[#0a4f91] bg-[#cce4f9]" label="Rectangular Fence">
          <span className="h-[13px] w-[19px] border border-dotted border-[#10107a]" />
        </DlgRow>
        <DlgRow gap="mt-[3px]" label="Polygon/Lasso Fence">
          <svg width="24" height="20" viewBox="0 0 24 20"><path d="M1 2l5 13 12-2V1l-7 7z" fill="none" stroke={T} strokeWidth="1.7" /><circle cx="17" cy="12" r="4.5" fill="none" stroke="#333" /><path d="M17 5v14M10 12h14" stroke="#333" /></svg>
        </DlgRow>
        <DlgRow gap="mt-[7px]" box="border-[#bfbfbf] bg-[#cccccc]" label="Back [b]">
          <svg width="18" height="12" viewBox="0 0 18 12"><path d="M1 6l6-5v3h10v4H7v3z" fill="#ececec" stroke="#8d8d8d" /></svg>
        </DlgRow>
        <DlgRow gap="mt-[3px]" box="border-[#bfbfbf] bg-[#cccccc]" label="Forward [n]">
          <svg width="18" height="12" viewBox="0 0 18 12"><path d="M17 6l-6-5v3H1v4h10v3z" fill="#ececec" stroke="#8d8d8d" /></svg>
        </DlgRow>
        <div className="mt-[6px] -mr-1 flex justify-end gap-1 text-[#838383]">
          <button className="flex h-[21px] w-[58px] items-center justify-center gap-[2px] border border-[#bfbfbf] bg-[#cccccc]"><Check size={13} strokeWidth={2.5} className="border border-[#bdbdbd] text-white" />Accept</button>
          <button className="flex h-[21px] w-[66px] items-center justify-center gap-[2px] border border-[#bfbfbf] bg-[#cccccc]"><X size={13} strokeWidth={3} className="bg-[#b5b5b5] text-white" />Deselect</button>
        </div>
      </div>
    </section>
  );
}

/* ---------- drawing area ---------- */

function Canvas() {
  return (
    <div className="relative flex-1 border-r border-[#cfcfcf] bg-linear-to-b from-[#dadada] via-[#efefef] via-60% to-[#ffffff]">
      <svg className="absolute inset-0 h-full w-full font-[Liberation_Sans]" aria-label="Sketch">
        <path d="M679 256v552M781 590h267" stroke="#a9a9a9" strokeWidth="1.5" />
        <path d="M679 141v115" stroke="#f58aa0" strokeWidth="1.5" strokeDasharray="3 13" />
        <path d="M207 590h574M679 128.500h102" stroke="#f58aa0" strokeWidth="1.2" />
        <path d="M771 130v188M771 351v238" stroke="#f7a3b4" strokeWidth="2" />
        <path d="M771 129l3.500 20h-7zM771 590l3.500-20h-7z" fill="#ff0060" />
        <text x="771" y="344" textAnchor="middle" fontSize="28" fill="#ff0060">75</text>
        <path d="M207 590L679 129" stroke="#0b0bef" strokeWidth="1.5" />
        <path d="M203 586l8 8M211 586l-8 8M675 125l8 8M683 125l-8 8" stroke="#ff1744" strokeWidth="1.5" />
        <path d="M679 588v-30" stroke="#5050b8" strokeWidth="3" /><path d="M679 545l3.500 13h-7z" fill="#1414d8" />
        <path d="M681 590h30" stroke="#e00038" strokeWidth="3" /><path d="M725 590l-14 3.500v-7z" fill="#a80018" />
        <circle cx="679" cy="590" r="5" fill="#a5a514" /><path d="M675 586l4 4 4-4M679 590v4" stroke="#1be81b" strokeWidth="2" fill="none" />
        <path d="M674 528h9l-9 9h9" fill="none" stroke="#0b0bef" strokeWidth="1.5" />
        <path d="M731 585.500l9 9M740 585.500l-9 9" stroke="#f00020" strokeWidth="1.5" />
      </svg>
      <button aria-label="Accept sketch" className="absolute top-[6px] left-[222px] flex h-[26px] w-[26px] items-center justify-center border border-[#1b7a1b] bg-[#269a26]">
        <svg width="18" height="18" viewBox="0 0 18 18"><path d="M1 9l5 7L17 1" fill="none" stroke="#fff" strokeWidth="1.5" /></svg>
      </button>
      <svg width="112" height="112" viewBox="0 0 112 112" className="absolute right-[72px] bottom-[72px] font-[Liberation_Sans]" aria-label="View cube">
        <rect x="1" y="1" width="110" height="110" rx="1" fill="#fcfcfc" stroke="#d6d6d6" strokeWidth="1.5" />
        <text x="56" y="65" textAnchor="middle" fontSize="25" fill="#707070">FRONT</text>
        <path d="M56 52V18" stroke="#9a9aff" strokeWidth="2" /><path d="M56 7l2.500 11h-5z" fill="#8a8af0" />
        <path d="M60 56h45" stroke="#ff9a9a" strokeWidth="2" /><path d="M105 56l-12 2.500v-5z" fill="#ef8080" />
        <circle cx="56" cy="56" r="4" fill="#ffff20" stroke="#c0a000" />
      </svg>
    </div>
  );
}

/* ---------- right side ---------- */

const LayerBtn = ({ name, off, gap }) => (
  <button aria-label={name} className={`flex h-[22px] w-[22px] items-center justify-center border ${gap} ${off ? 'border-[#bdbdbd] bg-[#c9c9c9]' : 'border-[#adadad] bg-[#e1e1e1]'}`}><Icon name={name} size={17} /></button>
);

function LayersPanel() {
  return (
    <aside className="flex w-[226px] shrink-0 flex-col border-l-2 border-[#c9c9c9] bg-[#f0f0f0] pl-px text-[11px]">
      <div className="flex h-[18px] items-center bg-white pr-2 pl-[6px]">
        <svg width="18" height="15" viewBox="0 0 18 15"><path d="M4 3h13v11H4z" fill="#cfe0f0" stroke="#1c3f8c" /><path d="M1 1h14v11H1z" fill="#fff" stroke="#1c3f8c" strokeWidth="1.5" /><path d="M3 5l3-3" stroke="#e02020" /><circle cx="7" cy="7.5" r="2.5" fill="none" stroke="#3a9a50" strokeWidth="1.3" /><path d="M10 3h3v3h-3z" fill="none" stroke={T} /></svg>
        <span className="ml-1 flex-1">Layers</span>
        <PanelMenu />
        <svg width="9" height="11" viewBox="0 0 9 11" className="mx-2"><path d="M2 0h5v6H2zM0 6.500h9M4.500 6v5M6 0v6" fill="none" stroke="#111" strokeWidth="1.4" /></svg>
        <X size={12} strokeWidth={2.2} />
      </div>
      <div className="flex h-[34px] pt-1">
        <LayerBtn name="newLayer" gap="mr-3" /><LayerBtn name="layerOn" gap="mr-1" /><LayerBtn name="layerOff" gap="mr-3" />
        <LayerBtn name="layerMove" gap="mr-3" off /><LayerBtn name="layerDel" gap="" off />
      </div>
      <ul className="flex-1 border-t border-r border-l border-[#828790] bg-white pt-px">
        <li className="flex h-4 items-center pl-2">
          <span className="flex h-[9px] w-[9px] items-center justify-center border border-[#8a8a8a] text-[#3c64b4]"><Minus size={7} /></span>
          <span className="w-[5px] border-t border-dotted border-[#888]" /><Icon name="layers" size={17} /><span className="ml-1">Layers</span>
        </li>
        <li className="flex h-4 items-center pl-[31px]">
          <span className="mb-2 h-2 w-[10px] border-b border-l border-dotted border-[#888]" /><svg width="18" height="16" viewBox="0 0 18 16"><path d="M1 14l5-6h10l-4 6z" fill="#eaf2fb" stroke="#2766b0" /><path d="M7 11l1-3 6-6 2 2-6 6z" fill="#ffd84a" stroke="#222" /></svg>
          <b className="ml-1">Default</b>
        </li>
      </ul>
    </aside>
  );
}

function SideTabs() {
  return (
    <nav className="flex w-[30px] shrink-0 flex-col items-end bg-[#f8fafa] pt-[7px] pr-[2px]">
      <button className="flex h-[19px] w-5 items-center justify-center rounded-l-[3px] bg-[#e8570e] text-[11px] text-white">3D</button>
      <button aria-label="Tools" className="mt-[15px]"><svg width="19" height="20" viewBox="0 0 19 20"><path d="M1 7l5-5 7-1 2 3-4 1-1 3-2-2-3 3z" fill="#8b9096" stroke="#5c6168" /><path d="M9 7l2-2 7 12-2 2z" fill="#d9902a" stroke="#8f5a12" strokeWidth=".8" /></svg></button>
      <button className="mt-4 flex flex-col items-center font-[Liberation_Serif] text-[11px]">
        <svg width="20" height="17" viewBox="0 0 20 17"><rect x=".7" y=".7" width="18.6" height="15.6" fill="#f6f8ff" stroke="#2a4f9c" strokeWidth="1.4" /><circle cx="6.5" cy="5.5" r="2.3" fill="#2766b0" /><circle cx="13.5" cy="5.5" r="2.3" fill="#8fa9b8" /><circle cx="6.5" cy="11.5" r="2.3" fill="#b97f10" /><circle cx="13.5" cy="11.5" r="2.3" fill="#6b5fc0" /></svg>
        <span className="mt-1 leading-3 [writing-mode:vertical-rl]">Style Palette</span>
      </button>
    </nav>
  );
}

/* ---------- context menus ---------- */

const Item = ({ on, hot, children }) => (
  <li>
    <button className={`flex h-[22px] w-full items-center text-left ${hot ? 'bg-[#d5dff1]' : ''}`}>
      <span className={`mr-[10px] flex h-5 w-5 items-center justify-center ${on ? 'bg-[#bfd2f0]' : ''}`}>{on && <Check size={12} strokeWidth={3.5} />}</span>
      {children}
    </button>
  </li>
);
const Rule = () => <li className="ml-[30px] h-[3px] border-b-2 border-[#e4e4e4]" />;
const menuBox = 'absolute border border-[#cfcfcf] bg-white p-px text-[11px] text-[#3e3e3e] shadow-[4px_4px_3px_rgba(0,0,0,0.5)]';

function Menus() {
  return (
    <>
      <ul className={`${menuBox} top-[93px] left-[981px] w-[301px]`}>
        <Item>Add to Quick Access Toolbar</Item>
        <Rule />
        <Item on><span className="pb-[2px] font-[Noto_Sans_CJK_TC] text-[13px]">預測指令</span></Item>
        <Rule />
        <Item><span><u>C</u>ustomize Quick Access Toolbar...</span></Item>
        <Item><span><u>S</u>how Quick Access Toolbar Below the Ribbon</span></Item>
        <Rule />
        <Item><span>Customize the <u>R</u>ibbon...</span></Item>
        <Item><span>Mi<u>n</u>imize the Ribbon</span></Item>
        <Rule />
        <Item hot><span className="flex-1">Themes</span><svg width="5" height="8" viewBox="0 0 5 8" className="mr-2"><path d="M0 0v8l5-4z" fill="#333" /></svg></Item>
      </ul>
      <ul className={`${menuBox} top-[239px] left-[1281px] w-[241px]`}>
        <Item>Balanced - TianGong CAD Default</Item>
        <Item>Standard - TianGong CAD Default</Item>
        <Rule />
        <Item on hot>VATEC</Item>
        {['平衡 - 天工 CAD 預設設定', '平衡 - 天工 CAD 默认设置', '标准 - 天工 CAD 默认设置', '標準 - 天工 CAD 默認設置'].map((t) => (
          <Item key={t}>
            <span className="pb-[2px]">
              {t.split(/( - |CAD )/).map((s, i) => (i % 2 ? s : <span key={i} className="font-[Noto_Sans_CJK_TC] text-[13px]">{s}</span>))}
            </span>
          </Item>
        ))}
      </ul>
      <div className="pointer-events-none absolute top-[110px] left-[969px] h-[46px] w-[248px] border-[5px] border-[#ed1c24]" />
    </>
  );
}

/* ---------- bottom bars ---------- */

const StatusBtn = ({ label, children }) => (
  <button aria-label={label} className="flex h-4 w-4 items-center justify-center border border-[#e4e4e4] bg-[#f4f4f4] text-[#444]">
    <svg width="14" height="14" viewBox="0 0 14 14" fill="none" stroke="currentColor" strokeWidth="1.3">{children}</svg>
  </button>
);
const Round = ({ label, children }) => (
  <button aria-label={label} className="flex h-[15px] w-[15px] items-center justify-center rounded-full border border-[#2a6f8c] bg-[#e8eef2] text-[13px] leading-3 text-[#2a6f8c]">{children}</button>
);

function StatusBar() {
  return (
    <footer className="relative flex h-5 items-center justify-end bg-linear-to-r from-[#6d98c1] from-55% to-[#6a99c0] pr-1 text-[11px] text-white">
      <span className="absolute inset-x-0 text-center text-xs"><span className="ml-[332px]">0 items are selected</span></span>
      <div className="relative flex items-center gap-[6px]">
        <StatusBtn label="Camera"><path d="M1 4h12v8H1zM4 2h6" /><circle cx="7" cy="8" r="2.5" fill="#8ccbe5" /></StatusBtn>
        <StatusBtn label="Zoom area"><path d="M1 1h12v10H1zM1 4h12M6 13V6h5v5" /></StatusBtn>
        <StatusBtn label="Zoom"><circle cx="8.5" cy="5" r="4" /><path d="M5 8l-4 5M7 5h3M8.500 3.500v3" /></StatusBtn>
        <StatusBtn label="Magnify"><g stroke="#aaa"><circle cx="8.5" cy="5" r="4" /><path d="M5 8l-4 5" /></g></StatusBtn>
        <StatusBtn label="Fit"><path d="M1 1h12v12H1zM1 4h12M4 7v4M10 7v4M4 7l2 2M10 11L8 9" /></StatusBtn>
        <StatusBtn label="Pan"><path d="M1 1h12v12H1zM1 4h12M3 8.500h8M5 6L3 8.500 5 11M9 6l2 2.500L9 11" /></StatusBtn>
        <StatusBtn label="Previous view"><path d="M1 5l5-4v2h5v4H6v2zM8 13l2-4 3 4z" /></StatusBtn>
        <button aria-label="View style" className="h-4 w-4"><svg width="16" height="16" viewBox="0 0 16 16"><path d="M3 3l3-3h9v10l-3 3z" fill="#8fd0ec" /><path d="M1 4h10v11H1z" fill="#ffe11a" /><path d="M4 7l5 5M4 7h4M4 7v4" stroke="#167016" strokeWidth="2" fill="none" /></svg></button>
        <button aria-label="Color" className="h-4 w-4"><svg width="16" height="16" viewBox="0 0 16 16"><path d="M1 1h9v9H1z" fill="#6d98c1" stroke="#7ec8ea" strokeWidth="1.5" /><path d="M6 6h9v9H6z" fill="#f5b417" /></svg></button>
        <Round label="Zoom out">−</Round>
        <input type="range" aria-label="Zoom level" defaultValue="45" className="-mx-[3px] h-[14px] w-[112px] appearance-none bg-[linear-gradient(#fff,#fff)] bg-[length:100%_1px] bg-center bg-no-repeat [&::-webkit-slider-thumb]:h-[13px] [&::-webkit-slider-thumb]:w-2 [&::-webkit-slider-thumb]:appearance-none [&::-webkit-slider-thumb]:rounded-b-[4px] [&::-webkit-slider-thumb]:border [&::-webkit-slider-thumb]:border-[#2a6f8c] [&::-webkit-slider-thumb]:bg-[#dfeaf0]" />
        <Round label="Zoom in">+</Round>
        <span className="ml-[2px]"><Round label="Orientation"><span className="h-2 w-2 rounded-full border border-[#555] bg-[#6f9fb6]" /></Round></span>
      </div>
    </footer>
  );
}

const App16 = ({ className, children }) => (
  <button className={`flex h-[30px] shrink-0 items-center justify-center ${className}`}>{children}</button>
);
const Running = ({ icon, className, children }) => (
  <button className={`flex h-[30px] shrink-0 items-center gap-1 border-b-2 border-[#76b9ed] pl-[3px] text-xs whitespace-nowrap ${className}`}>{icon}{children}</button>
);
const Svg = ({ children, size = 17 }) => <svg width={size} height={size} viewBox="0 0 18 18" className="shrink-0" aria-hidden="true">{children}</svg>;

const edge = <Svg><circle cx="9" cy="9" r="8" fill="#1583d8" /><path d="M1 9c0-9 15-10 16-1 0 4-7 4-7 1 0-3-8-4-9 0z" fill="#39c5a6" /><path d="M7 10c-1 5 4 7 8 5-3 3-11 2-11-3 0-1 1-3 3-2z" fill="#0b4f9e" /></Svg>;
const chrome = <Svg><circle cx="9" cy="9" r="8" fill="#e33b2e" /><path d="M9 9L2 5a8 8 0 0 0 6 12z" fill="#2f9e4b" /><path d="M9 9h8a8 8 0 0 1-9 8z" fill="#fbc116" /><circle cx="9" cy="9" r="3.7" fill="#fff" /><circle cx="9" cy="9" r="2.8" fill="#3b7de8" /></Svg>;
const copilot = <Svg><path d="M5 1h6l-3 12H3c-2 0-2-2-1-5z" fill="#2c8ff0" /><path d="M10 4h5c2 0 2 3 1 6l-2 6H8z" fill="#e0559a" /><path d="M3 13h6l-1 4H5z" fill="#f4b13e" /></Svg>;
const discord = <Svg size={18}><circle cx="9" cy="9" r="8.5" fill="#5865f2" /><path d="M5 6c3-1.500 5-1.500 8 0l1 6-2.500 1-1-1h-3l-1 1L4 12z" fill="#fff" /><circle cx="7.3" cy="9.5" r="1" fill="#5865f2" /><circle cx="10.7" cy="9.5" r="1" fill="#5865f2" /></Svg>;

function Taskbar() {
  return (
    <div className="flex h-[30px] items-center bg-linear-to-r from-[#33202a] via-[#1d1d1d] via-45% to-[#2c1b22] font-[Noto_Sans_CJK_SC] text-white">
      <App16 className="w-9"><svg width="17" height="17" viewBox="0 0 17 17"><path d="M0 2l7-1v7H0zM8 1l9-1v8H8zM0 9h7v7l-7-1zM8 9h9v8l-9-1z" fill="#fff" /></svg></App16>
      <label className="flex h-[30px] w-[258px] shrink-0 items-center bg-[#f2f2f2] pr-3 pl-3 text-[#333]">
        <Search size={17} strokeWidth={1.5} className="shrink-0 -scale-x-100" />
        <input aria-label="搜尋" placeholder="搜尋" className="mb-[2px] ml-3 w-[150px] font-[Noto_Sans_CJK_TC] text-[15px] outline-none placeholder:text-[#444]" />
        <svg width="38" height="28" viewBox="0 0 38 28" className="ml-auto shrink-0"><path d="M13 8h18l-3 17c-3 2-9 2-12 0z" fill="#c4652c" /><path d="M16 10h4l1 14h-3z" fill="#e39a62" /><path d="M13 9c-1-4 5-4 8-8 3 4 10 4 10 8-5 2-13 2-18 0z" fill="#f0d9b8" /><path d="M29 11c9-2 8 9-1 10" fill="none" stroke="#8fa8b0" strokeWidth="2" /><path d="M1 21l14-4v4L2 25zM3 24l13-2v4l-12 1z" fill="#b2482a" /></svg>
      </label>
      <App16 className="w-9"><svg width="17" height="16" viewBox="0 0 17 16"><path d="M2 4.500h9v7H2zM1 1.500h11M1 14.500h11M15 1v3M15 7v8" fill="none" stroke="#fff" strokeWidth="1.5" /></svg></App16>
      <App16 className="w-10">{copilot}</App16>
      <Running icon={edge} className="ml-[3px] w-[120px]">将元素指定给图...</Running>
      <App16 className="w-[42px]"><Svg><path d="M2 5h14v12H2zM6 5V2h6v3" fill="#f6f6f6" stroke="#f6f6f6" /><path d="M5 7h3.500v3.500H5z" fill="#f25022" /><path d="M9.500 7H13v3.500H9.500z" fill="#7fba00" /><path d="M5 11.500h3.500V15H5z" fill="#00a4ef" /><path d="M9.500 11.500H13V15H9.500z" fill="#ffb900" /></Svg></App16>
      <App16 className="w-[32px]"><Svg><path d="M4 2h12l-2 15H2z" fill="#a9dcef" stroke="#5d8c9d" /><path d="M6 5h8M5 8h8M5 11h8" stroke="#5d8c9d" /></Svg></App16>
      <Running icon={chrome} className="ml-[6px] w-[119px]">新迪3D社区-提...</Running>
      <App16 className="w-[44px]"><Svg><path d="M1 2h6l2 2h8v12H1z" fill="#f5c23a" /><path d="M4 9h10v7h-3v-3H7v3H4z" fill="#3f93d8" /></Svg></App16>
      <Running icon={<Scissors size={16} className="shrink-0 text-[#ee6b62]" />} className="w-[119px]">剪取工具</Running>
      <App16 className="ml-1 w-[35px]">{copilot}</App16>
      <App16 className="w-[35px]"><Svg><path d="M14 13c-4 5-11 1-10-5S14 2 14 9H6" fill="none" stroke="#36a9ee" strokeWidth="3" /><path d="M2 16C0 10 12 0 17 2" fill="none" stroke="#f6c445" strokeWidth="1.5" /></Svg></App16>
      <App16 className="w-[35px]"><Svg><ellipse cx="7" cy="7" rx="6" ry="5" fill="#3ecb55" /><ellipse cx="12.5" cy="12" rx="5" ry="4" fill="#e9f5ea" /></Svg></App16>
      <App16 className="w-[35px]"><Svg><circle cx="9" cy="9" r="7" fill="none" stroke="#e0473e" strokeWidth="1.5" /><circle cx="9" cy="9" r="3.5" fill="#e0473e" /></Svg></App16>
      <App16 className="w-[35px]"><Svg><circle cx="9" cy="9" r="8" fill="#18a7b5" /><circle cx="9" cy="8.5" r="4.5" fill="none" stroke="#fff" strokeWidth="1.8" /><path d="M9 10l4 6" stroke="#fff" strokeWidth="1.8" /></Svg></App16>
      <App16 className="w-[35px]"><Svg><path d="M6 2h10v13H6z" fill="#35a5e8" /><path d="M1 5h9v9H1z" fill="#0f63b5" /><circle cx="5.5" cy="9.5" r="2.3" fill="none" stroke="#fff" strokeWidth="1.5" /></Svg></App16>
      <App16 className="w-[35px]"><Svg><path d="M2 2l4 4h10M5 9h11M5 12h9M5 15h11M3 4h13M4 17h10" stroke="#d8d8d8" strokeWidth="1.4" fill="none" /></Svg></App16>
      <App16 className="ml-[34px] w-[35px]"><Svg><path d="M9 1l7 4v7l-7 5-7-5V5z" fill="#6b76d8" /><path d="M9 5l4 2v4l-4 2-4-2V7z" fill="#241c22" /><path d="M2 5l7-4 2 4-5 3v4z" fill="#b39af0" /></Svg></App16>
      <App16 className="w-[35px]"><Svg><rect x="1" y="1" width="16" height="16" rx="3" fill="#fff" /><circle cx="6" cy="10" r="2.5" fill="none" stroke="#2a7df0" strokeWidth="1.5" /><circle cx="12" cy="10" r="2.5" fill="none" stroke="#2a7df0" strokeWidth="1.5" /><circle cx="9" cy="6" r="2.3" fill="none" stroke="#ef4458" strokeWidth="1.5" /></Svg></App16>
      <Running icon={<Logo size={18} />} className="ml-px w-[127px] bg-[#4a484a] pl-[7px] font-[Open_Sans]">TianGong CAD...</Running>
      <App16 className="w-[36px]"><span className="flex h-[14px] w-[14px] items-center justify-center rounded-[5px] bg-[#1fa3e6] text-[10px] leading-3 font-bold">S</span></App16>
      <App16 className="w-[34px]"><Svg><path d="M3 1h8l4 4v12H3z" fill="#f7f7f7" /><path d="M11 1v4h4" fill="none" stroke="#999" /></Svg></App16>
      <Running icon={discord} className="ml-[5px] w-[119px] font-[Open_Sans]">#feedback | Vi...</Running>
      <div className="ml-auto flex items-center pr-6 font-[Open_Sans]">
        <span className="relative mr-2">
          <svg width="27" height="26" viewBox="0 0 27 26"><path d="M14 2a9 9 0 0 1-11 9 9 9 0 0 0 14 6z" fill="#f3a81c" /><path d="M5 24c-5 0-5-7 0-7 1-6 11-6 12 0 8-2 10 7 4 7z" fill="#b9cdf3" /></svg>
          <span className="absolute top-0 -right-[1px] flex h-3 w-3 items-center justify-center rounded-full bg-[#cf2a27] text-[9px]">1</span>
        </span>
        <span className="mr-[18px] text-[14px]">16°C</span>
        <div className="flex items-center gap-[7px]">
          <ChevronUp size={17} />
          <Svg size={16}><path d="M4 5h10v8H4zM6 2h6M6 16h6" fill="none" stroke="#fff" strokeWidth="1.5" /><circle cx="9" cy="9" r="2" fill="none" stroke="#fff" /></Svg>
          <Svg><path d="M1 3l7-2 7 2v6c0 4-4 6-7 8-3-2-7-4-7-8z" fill="#fff" /><path d="M8 3v12M3 9h10" stroke="#222" strokeWidth="1.5" /><circle cx="13" cy="13" r="4.5" fill="#2fa84a" /><path d="M11 13l1.500 1.500L15 12" stroke="#fff" fill="none" /></Svg>
          <Svg><path d="M6 1h6v4H6zM4 5h10v12H4zM12 14l2 2 3-4" fill="none" stroke="#fff" strokeWidth="1.2" /></Svg>
          <Svg><path d="M5 4h12v8H5zM11 12v4M7 16h8M1 2h5v4H1zM3 6v9" fill="none" stroke="#fff" strokeWidth="1.2" /></Svg>
          <Volume2 size={17} strokeWidth={1.5} />
        </div>
        <span className="ml-2 text-xs">ENG</span>
        <span className="mr-6 ml-4 text-xs">2:52</span>
        <svg width="17" height="17" viewBox="0 0 17 17"><path d="M1 1h15v12h-4l-3 3v-3H1z" fill="#fff" /><path d="M4 4.500h9M4 7.500h9M4 10.500h6" stroke="#222" strokeWidth="1.3" /></svg>
      </div>
    </div>
  );
}

export default function App() {
  return (
    <div className="relative flex min-h-screen flex-col overflow-hidden bg-white font-['Open_Sans','Noto_Sans_CJK_TC',sans-serif] text-black">
      <TitleBar />
      <Ribbon />
      <CommandBar />
      <main className="flex flex-1">
        <div className="flex min-w-0 flex-1 flex-col">
          <div className="flex h-[31px] items-end border-b border-[#5b8fc7] pl-[2px]">
            <button className="flex h-7 w-[124px] items-center justify-center gap-1 bg-[#6d98c1] text-[11px] text-[#e6f0fa]">
              <svg width="16" height="16" viewBox="0 0 16 16"><path d="M3 1h12v14H3z" fill="#f4f4f4" /><path d="M1 3h5v5h5v5H1z" fill="#26a5e4" stroke="#0d5f94" /></svg>Part1: Sketch
            </button>
            <div className="mr-[5px] mb-3 ml-auto flex items-center gap-[9px] text-[#333]">
              <svg width="6" height="9" viewBox="0 0 6 9"><path d="M5 1v7L1 4.500z" fill="none" stroke="currentColor" /></svg>
              <svg width="6" height="9" viewBox="0 0 6 9"><path d="M1 1v7l4-3.500z" fill="none" stroke="currentColor" /></svg>
              <svg width="8" height="5" viewBox="0 0 8 5"><path d="M0 0h8L4 5z" fill="#111" /></svg>
            </div>
          </div>
          <div className="flex flex-1"><PathFinder /><Canvas /></div>
          <div className="flex h-[26px] items-end">
            <span className="flex h-[22px] w-[35px] items-center border-t-2 border-[#d0d0d0] pl-[5px]"><span className="h-2 w-5 border border-t-2 border-[#2d5f9e] bg-[#dce8f5]" /></span>
            <div className="flex h-[22px] flex-1 items-center justify-between border-t border-l border-[#9a9a9a] pl-[2px]">
              <p className="text-[13px]">Click elements, drag right for inside fence, drag left for inside/overlapping fence, or Alt+click to place first vertex of polygon fence, or Alt+click+drag for a lasso fence. Press Esc to clear the display of keypoints.</p>
              <span className="flex w-4 flex-col items-center gap-1 bg-[#f0f0f0] py-1 text-[#555]"><svg width="8" height="5" viewBox="0 0 8 5"><path d="M1 4l3-3 3 3" fill="none" stroke="currentColor" strokeWidth="1.8" /></svg><svg width="8" height="5" viewBox="0 0 8 5"><path d="M1 1l3 3 3-3" fill="none" stroke="currentColor" strokeWidth="1.8" /></svg></span>
            </div>
          </div>
        </div>
        <LayersPanel />
        <SideTabs />
      </main>
      <StatusBar />
      <Taskbar />
      <SelectDialog />
      <Menus />
    </div>
  );
}
